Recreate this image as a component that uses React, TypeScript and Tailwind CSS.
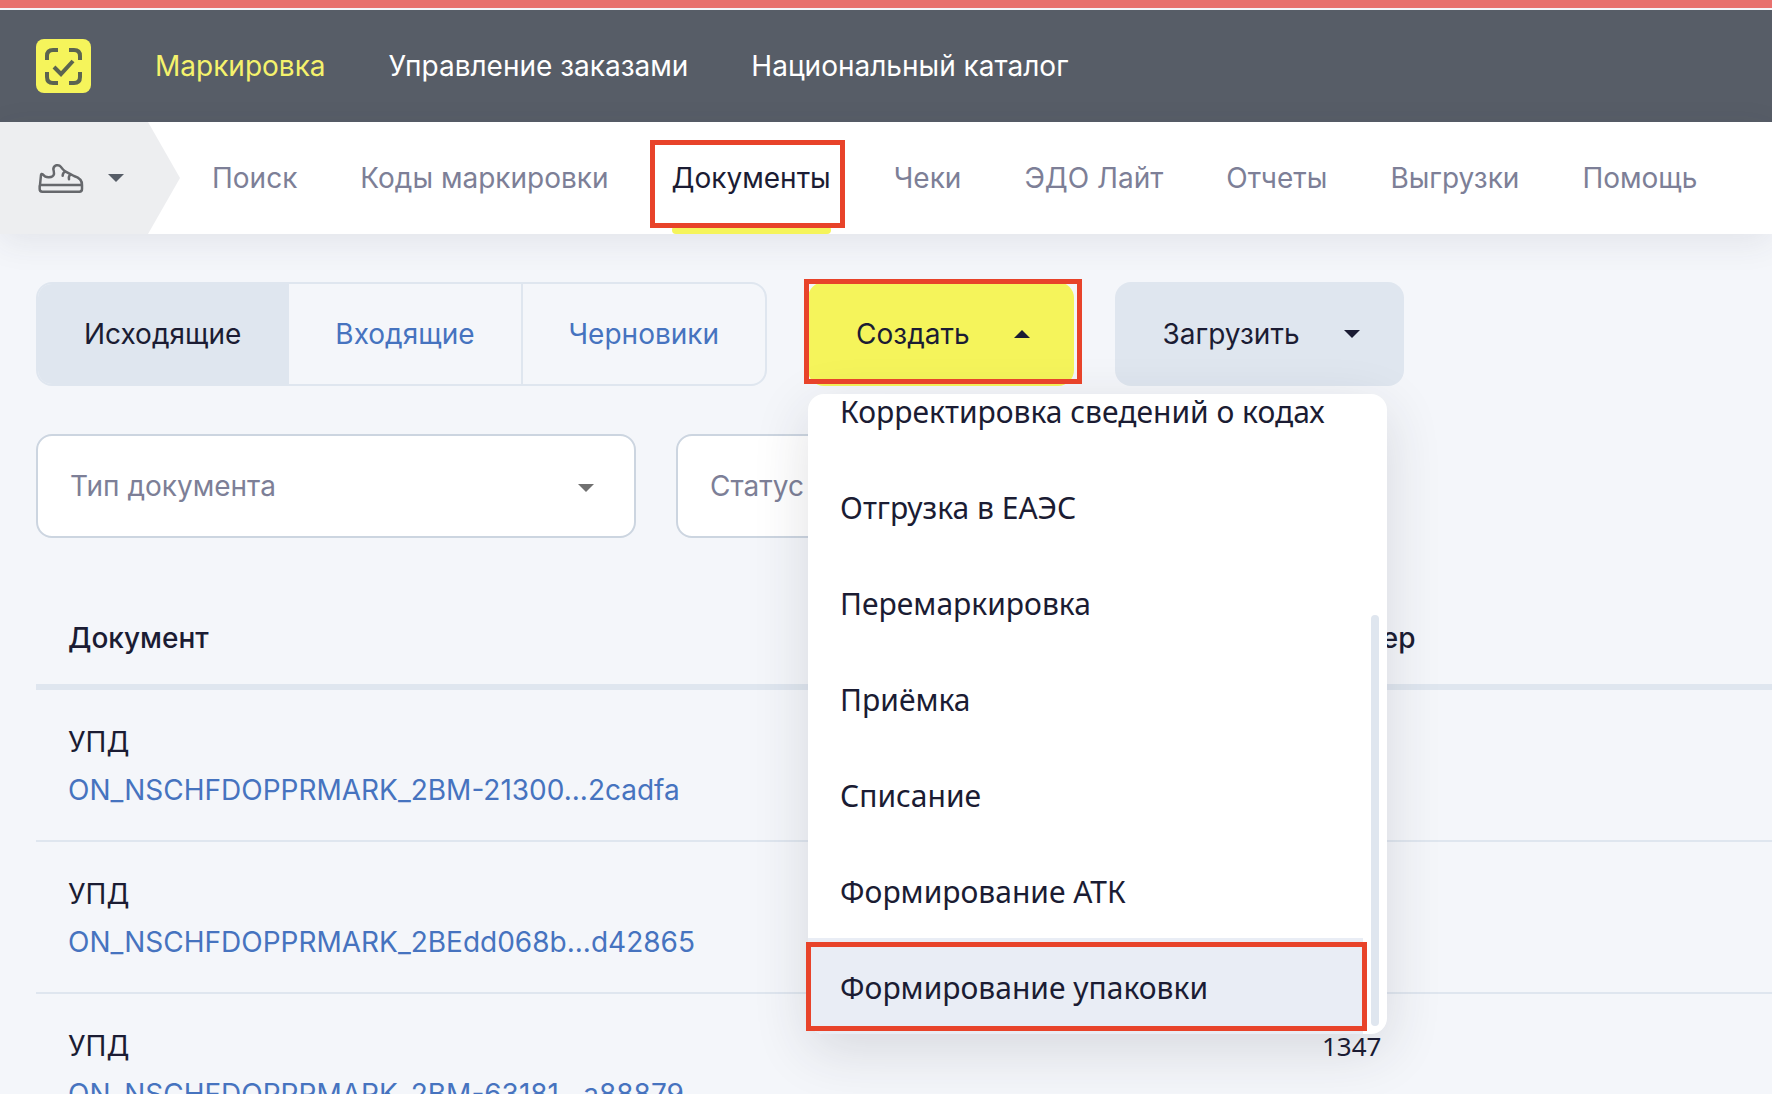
import { useState } from "react"
import clsx from "clsx"

const sections = ["Маркировка", "Управление заказами", "Национальный каталог"]

const pages = ["Поиск", "Коды маркировки", "Документы", "Чеки", "ЭДО Лайт", "Отчеты", "Выгрузки", "Помощь"]

const folders = ["Исходящие", "Входящие", "Черновики"]

const createOptions = [
  "Корректировка сведений о кодах",
  "Отгрузка в ЕАЭС",
  "Перемаркировка",
  "Приёмка",
  "Списание",
  "Формирование АТК",
  "Формирование упаковки",
]

const documents = [
  { type: "УПД", name: "ON_NSCHFDOPPRMARK_2BM-21300...2cadfa", number: "" },
  { type: "УПД", name: "ON_NSCHFDOPPRMARK_2BEdd068b...d42865", number: "" },
  { type: "УПД", name: "ON_NSCHFDOPPRMARK_2BM-63181...a88879", number: "1347" },
]

function Caret({ up = false, className }: { up?: boolean; className?: string }) {
  return (
    <svg width="16" height="8" viewBox="0 0 16 8" fill="currentColor" className={className} aria-hidden="true">
      <path d={up ? "M0 8 8 0l8 8z" : "M0 0h16L8 8z"} />
    </svg>
  )
}

function Logo() {
  return (
    <svg width="55" height="54" viewBox="0 0 55 54" fill="none" aria-hidden="true">
      <rect width="55" height="54" rx="8" fill="#f5f45b" />
      <g stroke="#5b6450" strokeWidth="4">
        <path d="M11 21v-4q0-6 6-6h5M33 11h5q6 0 6 6v4M44 33v5q0 6-6 6h-5M22 44h-5q-6 0-6-6v-5" />
        <path d="m18 28 7 7 12-13" />
      </g>
    </svg>
  )
}

function Sneaker() {
  return (
    <svg width="46" height="30" viewBox="51 43 138 90" fill="none" stroke="#66686c" strokeWidth="7.5" strokeLinecap="round" strokeLinejoin="round" aria-hidden="true">
      <path d="M57 109 60 79q1-5 5-2 8 10 19 9 13-1 15-10 0-7-2-15 1-9 9-11 9-2 13 4 6 9 15 15 13 7 25 13 25 8 24 27v12q0 8-8 8H64q-8 0-8-8v-8q0-4 4-4h122" />
      <path d="M133 69q-8 3-8 12M148 78q-6 4-4 14" />
    </svg>
  )
}

function Mark({ className }: { className: string }) {
  return <span aria-hidden="true" className={clsx("pointer-events-none absolute z-20 border-5 border-[#e8432a]", className)} />
}

function FilterSelect({ label }: { label: string }) {
  return (
    <div className="relative w-[600px]">
      <select aria-label={label} className="h-[104px] w-full appearance-none rounded-2xl border-2 border-[#ccd5e0] bg-white px-8 text-[28px] text-[#7d7f97]">
        <option>{label}</option>
      </select>
      <Caret className="pointer-events-none absolute right-[42px] top-[50px] text-[#707070]" />
    </div>
  )
}

export default function App() {
  const [page, setPage] = useState("Документы")
  const [folder, setFolder] = useState("Исходящие")
  const [open, setOpen] = useState(true)

  return (
    <div className="h-screen overflow-hidden bg-[#f4f6fa] text-[28px] leading-[48px] text-[#1b1c33] font-['Inter',sans-serif]">
      <div className="h-2 bg-[#e8716e]" />
      <header className="mt-0.5 flex h-28 items-center gap-16 bg-[#575d67] px-9 text-white">
        <Logo />
        <nav className="flex gap-[63px] whitespace-nowrap">
          {sections.map((s, i) => (
            <a key={s} href="#" className={clsx(i === 0 && "text-[#f5f26c]")}>{s}</a>
          ))}
        </nav>
      </header>

      <div className="flex h-28 bg-white shadow-[0_8px_32px_rgba(60,60,80,0.09)]">
        <button
          aria-label="Товарная группа"
          className="flex w-[180px] items-center gap-6 bg-[#edeef0] pl-[38px] text-[#575d67] [clip-path:polygon(0_0,148px_0,100%_50%,148px_100%,0_100%)]"
        >
          <Sneaker />
          <Caret />
        </button>
        <nav className="ml-8 flex gap-[63px] whitespace-nowrap">
          {pages.map((p) => (
            <a
              key={p}
              href="#"
              onClick={() => setPage(p)}
              className={clsx("relative flex items-center", p === page ? "text-[#1b1c33]" : "text-[#7d7f97]")}
            >
              {p}
              {p === page && (
                <>
                  <span className="absolute inset-x-0 bottom-0 h-2 rounded-full bg-[#f5f45b]" />
                  <Mark className="-left-[22px] -right-3.5 bottom-1.5 top-[18px]" />
                </>
              )}
            </a>
          ))}
        </nav>
      </div>

      <main className="pl-9 pt-12">
        <div className="flex gap-[41px]">
          <div className="flex h-[104px] divide-x-2 divide-[#dfe6ef] overflow-hidden rounded-2xl border-2 border-[#dfe6ef]">
            {folders.map((f) => (
              <button
                key={f}
                onClick={() => setFolder(f)}
                className={clsx("px-[46px]", f === folder ? "bg-[#dfe6ef]" : "text-[#4673bf]")}
              >
                {f}
              </button>
            ))}
          </div>
          <div className="relative">
            <button
              onClick={() => setOpen(!open)}
              aria-expanded={open}
              className="flex h-[104px] items-center gap-11 rounded-2xl bg-[#f5f45b] pl-12 pr-11"
            >
              Создать
              <Caret up={open} />
            </button>
            <Mark className="-left-1 -right-2 -top-[3px] bottom-0.5" />
            {open && (
              <div className="absolute left-0 top-28 z-10 w-[579px] rounded-2xl bg-white shadow-[0_16px_56px_rgba(40,40,60,0.14)]">
                <ul className="flex h-[640px] flex-col justify-end overflow-hidden rounded-2xl pr-6 text-[30px] font-['Noto_Sans',sans-serif]">
                  {createOptions.map((o, i) => (
                    <li key={o} className="shrink-0">
                      <button className={clsx("h-24 w-full px-8 pt-1 text-left whitespace-nowrap", i === createOptions.length - 1 && "bg-[#e9edf5]")}>
                        {o}
                      </button>
                    </li>
                  ))}
                </ul>
                <div className="absolute bottom-2 right-2 h-[411px] w-2 rounded-full bg-[#dfe6ef]" />
                <Mark className="-left-0.5 bottom-[3px] right-5 h-[89px]" />
              </div>
            )}
          </div>
          <button className="flex h-[104px] items-center gap-11 rounded-2xl bg-[#dfe6ef] pl-12 pr-11">
            Загрузить
            <Caret />
          </button>
        </div>

        <div className="mt-12 flex gap-10">
          <FilterSelect label="Тип документа" />
          <FilterSelect label="Статус" />
        </div>

        <table className="mt-[52px] w-full table-fixed text-left">
          <thead>
            <tr className="border-b-6 border-[#dfe6ef]">
              <th className="w-[1254px] px-8 pb-[22px] pt-6 font-medium">Документ</th>
              <th className="px-8 pb-[22px] pt-6 font-medium">Номер</th>
            </tr>
          </thead>
          <tbody>
            {documents.map((d) => (
              <tr key={d.name} className="border-b-2 border-[#dfe6ef]">
                <td className="px-8 pb-[26px] pt-7">
                  <div>{d.type}</div>
                  <a href="#" className="block text-[#4673bf]">{d.name}</a>
                </td>
                <td className="px-8 pb-[26px] pt-7 align-top text-[26px] font-['Noto_Sans',sans-serif]">{d.number}</td>
              </tr>
            ))}
          </tbody>
        </table>
      </main>
    </div>
  )
}
